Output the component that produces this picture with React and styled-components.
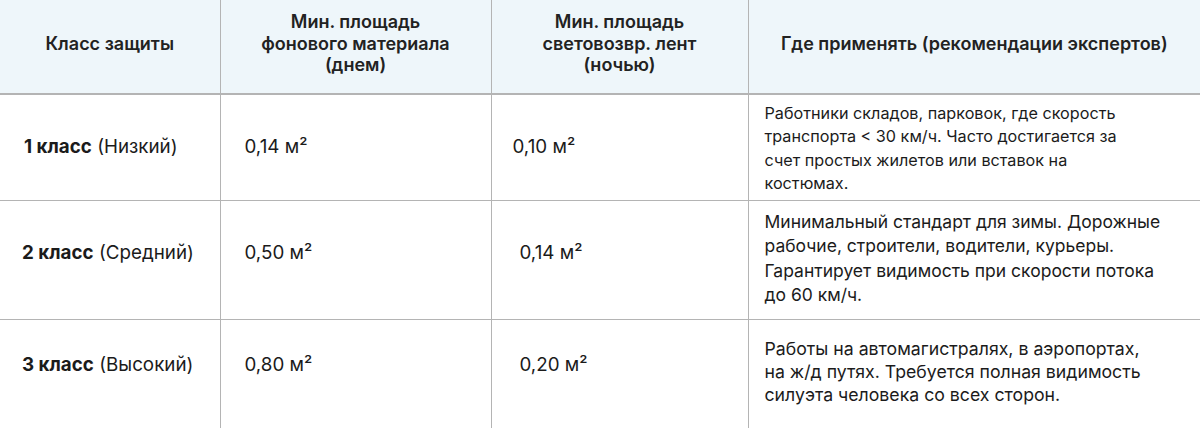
import React from "react";
import styled, { createGlobalStyle } from "styled-components";

const Global = createGlobalStyle`
  html, body { margin: 0; padding: 0; background: #ffffff; }
  body { font-family: Inter, "Noto Sans", sans-serif; color: #1b1b1b; }
`;

const Table = styled.table`
  width: 1200px;
  border-collapse: collapse;
  table-layout: fixed;
  font-family: Inter, "Noto Sans", sans-serif;
`;

const HeadRow = styled.tr`
  height: 94px;
  background: #eef6fa;
  border-bottom: 2px solid #b4b4b4;
`;

const HeadCell = styled.th`
  font-size: 18px;
  font-weight: 600;
  line-height: 21.7px;
  color: #222;
  text-align: center;
  vertical-align: middle;
  padding: 0 10px 6px;
  border-left: 1px solid #b4b4b4;
  &:first-child { border-left: none; }
`;

const Line = styled.span`
  display: block;
  white-space: nowrap;
`;

const Row = styled.tr`
  height: ${(p) => p.$h}px;
  border-bottom: ${(p) => (p.$last ? "none" : "1px solid #b4b4b4")};
`;

const Cell = styled.td`
  font-size: 18.8px;
  line-height: 24px;
  color: #1b1b1b;
  vertical-align: top;
  white-space: nowrap;
  padding: ${(p) => p.$top}px 8px 0 ${(p) => p.$left}px;
  border-left: 1px solid #b4b4b4;
  &:first-child { border-left: none; }
`;

const DescCell = styled.td`
  font-size: ${(p) => p.$size}px;
  line-height: ${(p) => p.$lh}px;
  color: #1b1b1b;
  vertical-align: top;
  padding: ${(p) => p.$top}px 8px 0 16px;
  border-left: 1px solid #b4b4b4;
`;

const Strong = styled.b`
  font-weight: 700;
`;

const rows = [
  {
    h: 106,
    top: 40,
    labelLeft: 24,
    cls: "1 класс",
    level: "(Низкий)",
    day: "0,14 м²",
    night: "0,10 м²",
    nightLeft: 21,
    desc: {
      size: 16.2,
      lh: 23.4,
      top: 7,
      lines: [
        "Работники складов, парковок, где скорость",
        "транспорта < 30 км/ч. Часто достигается за",
        "счет простых жилетов или вставок на",
        "костюмах.",
      ],
    },
  },
  {
    h: 119,
    top: 40,
    labelLeft: 22,
    cls: "2 класс",
    level: "(Средний)",
    day: "0,50 м²",
    night: "0,14 м²",
    nightLeft: 28,
    desc: {
      size: 17.5,
      lh: 24.6,
      top: 9,
      lines: [
        "Минимальный стандарт для зимы. Дорожные",
        "рабочие, строители, водители, курьеры.",
        "Гарантирует видимость при скорости потока",
        "до 60 км/ч.",
      ],
    },
  },
  {
    h: 110,
    top: 33,
    labelLeft: 22,
    cls: "3 класс",
    level: "(Высокий)",
    day: "0,80 м²",
    night: "0,20 м²",
    nightLeft: 28,
    desc: {
      size: 17.7,
      lh: 23.3,
      top: 17,
      lines: [
        "Работы на автомагистралях, в аэропортах,",
        "на ж/д путях. Требуется полная видимость",
        "силуэта человека со всех сторон.",
      ],
    },
    last: true,
  },
];

const headers = [
  ["Класс защиты"],
  ["Мин. площадь", "фонового материала", "(днем)"],
  ["Мин. площадь", "световозвр. лент", "(ночью)"],
  ["Где применять (рекомендации экспертов)"],
];

export default function App() {
  return (
    <>
      <Global />
      <Table>
        <colgroup>
          <col style={{ width: 220 }} />
          <col style={{ width: 271 }} />
          <col style={{ width: 257 }} />
          <col />
        </colgroup>
        <thead>
          <HeadRow>
            {headers.map((lines, i) => (
              <HeadCell key={i}>
                {lines.map((l) => (
                  <Line key={l}>{l}</Line>
                ))}
              </HeadCell>
            ))}
          </HeadRow>
        </thead>
        <tbody>
          {rows.map((r) => (
            <Row key={r.cls} $h={r.h} $last={r.last}>
              <Cell $top={r.top} $left={r.labelLeft}>
                <Strong>{r.cls}</Strong> {r.level}
              </Cell>
              <Cell $top={r.top} $left={24}>{r.day}</Cell>
              <Cell $top={r.top} $left={r.nightLeft}>{r.night}</Cell>
              <DescCell $size={r.desc.size} $lh={r.desc.lh} $top={r.desc.top}>
                {r.desc.lines.map((l) => (
                  <Line key={l}>{l}</Line>
                ))}
              </DescCell>
            </Row>
          ))}
        </tbody>
      </Table>
    </>
  );
}
